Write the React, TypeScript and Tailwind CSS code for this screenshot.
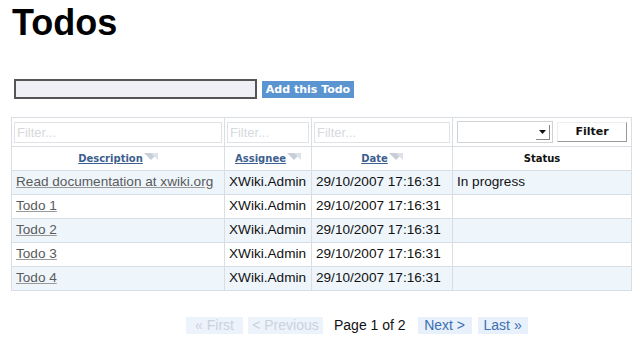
import React from "react";

function SortIcon() {
  return (
    <svg width="14" height="8" viewBox="0 0 14 8" className="inline-block ml-[1px] align-[1px]">
      <polygon points="0,0 14,0 7,7" fill="#c8ced6" />
      <polygon points="7,0 14,0 14,7" fill="#dde2e8" />
    </svg>
  );
}

const rows = [
  { d: "Read documentation at xwiki.org", s: "In progress" },
  { d: "Todo 1", s: "" },
  { d: "Todo 2", s: "" },
  { d: "Todo 3", s: "" },
  { d: "Todo 4", s: "" },
];

const verdana = { fontFamily: '"DejaVu Sans", Verdana, sans-serif' };

export default function App() {
  return (
    <div
      className="w-[640px] h-[340px] bg-white relative overflow-hidden"
      style={{ fontFamily: '"Liberation Sans", Arial, sans-serif' }}
    >
      <h1 className="absolute left-[12px] top-[1px] text-[36px] font-bold leading-[44px] text-black">Todos</h1>
      <div className="absolute left-[14px] top-[79px] flex items-center gap-[5px]">
        <div className="w-[243px] h-[20px] border-2 border-[#555] bg-[#eef0f5]" />
        <div
          className="h-[17px] w-[92px] bg-[#5b95d1] text-white text-[11px] font-bold leading-[17px] text-center"
          style={verdana}
        >
          Add this Todo
        </div>
      </div>

      <table className="absolute left-[11px] top-[117px] border-collapse border border-[#d9dee4] text-[13.6px] text-[#111]">
        <colgroup>
          <col className="w-[213px]" />
          <col className="w-[87px]" />
          <col className="w-[141px]" />
          <col className="w-[179px]" />
        </colgroup>
        <tbody>
          <tr className="h-[29px] bg-white">
            <td className="border border-[#d9dee4] px-[2px]">
              <div className="h-[21px] border border-[#dfe2e6] text-[13px] text-[#d6d9dd] leading-[19px] px-[2px]">Filter...</div>
            </td>
            <td className="border border-[#d9dee4] px-[2px]">
              <div className="h-[21px] border border-[#dfe2e6] text-[13px] text-[#d6d9dd] leading-[19px] px-[2px]">Filter...</div>
            </td>
            <td className="border border-[#d9dee4] px-[2px]">
              <div className="h-[21px] border border-[#dfe2e6] text-[13px] text-[#d6d9dd] leading-[19px] px-[2px]">Filter...</div>
            </td>
            <td className="border border-[#d9dee4] px-[4px]">
              <div className="flex items-center gap-[4px]">
                <div className="w-[96px] h-[22px] border border-[#cfd3d8] flex justify-end items-center pr-[2px]">
                  <div className="w-[14px] h-[15px] border-r border-b border-[#888] flex items-center justify-center">
                    <svg width="7" height="4" viewBox="0 0 7 4"><polygon points="0,0 7,0 3.5,4" fill="#111" /></svg>
                  </div>
                </div>
                <div
                  className="w-[70px] h-[20px] border-r border-b border-[#999] border-t border-l border-t-[#eee] border-l-[#eee] text-[11px] font-bold text-center leading-[18px] text-[#111]"
                  style={verdana}
                >
                  Filter
                </div>
              </div>
            </td>
          </tr>
          <tr className="h-[24px] bg-white text-[10px] font-bold" style={verdana}>
            <td className="border border-[#d9dee4] text-center">
              <span className="text-[#3d5f8f] underline">Description</span>
              <SortIcon />
            </td>
            <td className="border border-[#d9dee4] text-center">
              <span className="text-[#3d5f8f] underline">Assignee</span>
              <SortIcon />
            </td>
            <td className="border border-[#d9dee4] text-center">
              <span className="text-[#3d5f8f] underline">Date</span>
              <SortIcon />
            </td>
            <td className="border border-[#d9dee4] text-center text-[#111]">Status</td>
          </tr>
          {rows.map((r, i) => (
            <tr key={i} className={"h-[24px] " + (i % 2 === 0 ? "bg-[#eef6fc]" : "bg-white")}>
              <td className="border border-[#d9dee4] px-[4px]">
                <span className="text-[#5a5a5a] underline decoration-[#999]">{r.d}</span>
              </td>
              <td className="border border-[#d9dee4] px-[4px]">XWiki.Admin</td>
              <td className="border border-[#d9dee4] px-[4px]">29/10/2007 17:16:31</td>
              <td className="border border-[#d9dee4] px-[4px]">{r.s}</td>
            </tr>
          ))}
        </tbody>
      </table>

      <div className="absolute left-[186px] top-[317px] flex items-center text-[14px] leading-[17px]">
        <span className="bg-[#edf3fb] text-[#c9d2de] h-[17px] w-[57px] text-center">« First</span>
        <span className="ml-[5px] bg-[#edf3fb] text-[#c9d2de] h-[17px] w-[75px] text-center">&lt; Previous</span>
        <span className="ml-[11px] text-[#111]">Page 1 of 2</span>
        <span className="ml-[12px] bg-[#e7f0fb] text-[#3d6fb0] h-[17px] w-[54px] text-center">Next &gt;</span>
        <span className="ml-[6px] bg-[#e7f0fb] text-[#3d6fb0] h-[17px] w-[50px] text-center">Last »</span>
      </div>
    </div>
  );
}
